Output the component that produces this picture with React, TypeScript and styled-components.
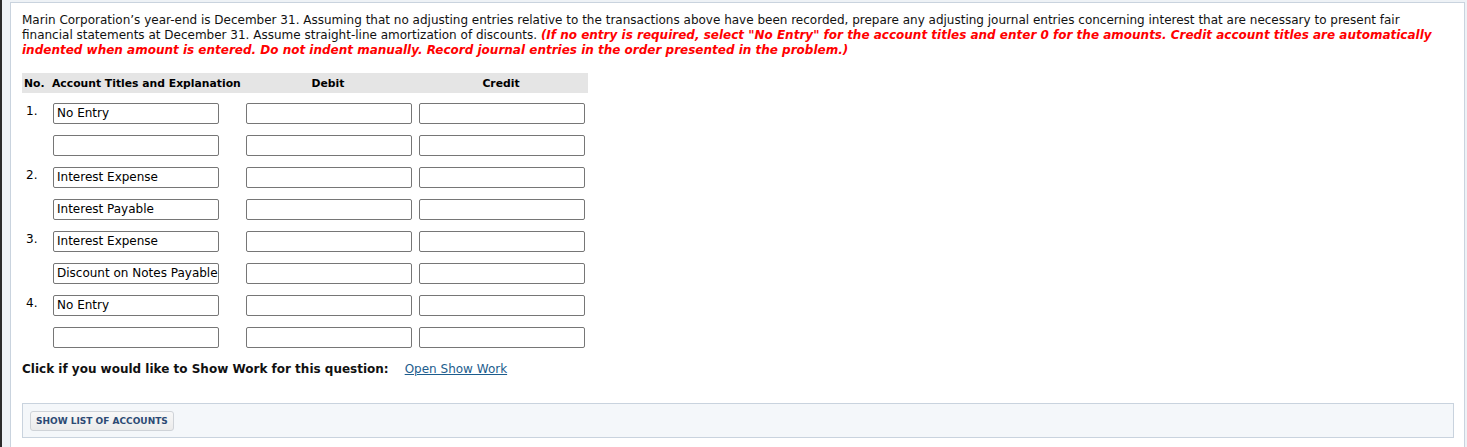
import React from "react";
import styled, { createGlobalStyle } from "styled-components";

const Global = createGlobalStyle`
  html, body { margin: 0; padding: 0; background: #ffffff; }
  body { font-family: Verdana, "DejaVu Sans", sans-serif; font-size: 12px; color: #000; }
`;

const Frame = styled.div`
  border-left: 2px solid #2b2b2b;
  background: #eef2f6;
  padding: 2px 2px 0 8px;
  min-height: 445px;
  box-sizing: border-box;
`;

const Panel = styled.div`
  background: #ffffff;
  border: 1px solid #c9d3de;
  border-bottom: none;
  padding: 10px 10px 10px 11px;
  min-height: 443px;
  box-sizing: border-box;
`;

const Prompt = styled.p`
  margin: 0;
  line-height: 15px;
  font-size: 12px;
  color: #111;
`;

const Note = styled.em`
  color: #ff0000;
  font-weight: bold;
`;

const Table = styled.div`
  margin-top: 15px;
  width: 566px;
`;

const Header = styled.div`
  display: grid;
  grid-template-columns: 30px 166px 27px 166px 7px 166px;
  height: 20px;
  align-items: center;
  background: #e5e5e5;
  font-weight: bold;
  font-size: 10.8px;
`;

const HeadCell = styled.div<{ $center?: boolean; $pad?: number }>`
  text-align: ${(p) => (p.$center ? "center" : "left")};
  padding-left: ${(p) => p.$pad ?? 0}px;
  white-space: nowrap;
`;

const Rows = styled.div`
  display: flex;
  flex-direction: column;
  gap: 11px;
  margin-top: 10px;
`;

const Row = styled.div`
  display: grid;
  grid-template-columns: 31px 166px 27px 166px 7px 166px;
  align-items: start;
`;

const Num = styled.div`
  padding: 2px 0 0 4px;
  font-size: 12px;
  line-height: 12px;
`;

const Field = styled.div`
  height: 21px;
  box-sizing: border-box;
  border: 1px solid #767676;
  border-radius: 2px;
  background: #fff;
  padding: 0 3px;
  font-size: 12px;
  line-height: 19px;
  white-space: nowrap;
  overflow: hidden;
`;

const ShowWork = styled.div`
  margin-top: 13px;
  display: flex;
  align-items: center;
  gap: 16px;
  line-height: 16px;
`;

const ShowLabel = styled.span`
  font-weight: bold;
  font-size: 12px;
  color: #111;
`;

const Link = styled.a`
  color: #1d5d8d;
  text-decoration: underline;
  font-size: 12px;
  cursor: pointer;
`;

const AccountsBar = styled.div`
  margin-top: 26px;
  background: #f4f7fa;
  border: 1px solid #c9d3de;
  padding: 6px 7px;
  width: 1432px;
  box-sizing: border-box;
  height: 35px;
  display: flex;
  align-items: center;
`;

const Button = styled.button`
  font-family: Verdana, "DejaVu Sans", sans-serif;
  font-size: 9px;
  font-weight: bold;
  color: #2c4a74;
  background: linear-gradient(#f8f8f8, #ebebeb);
  border: 1px solid #cfd3d8;
  border-radius: 3px;
  height: 20px;
  padding: 0 5px;
  letter-spacing: 0;
`;

const rows: { n?: string; acct: string }[] = [
  { n: "1.", acct: "No Entry" },
  { acct: "" },
  { n: "2.", acct: "Interest Expense" },
  { acct: "Interest Payable" },
  { n: "3.", acct: "Interest Expense" },
  { acct: "Discount on Notes Payable" },
  { n: "4.", acct: "No Entry" },
  { acct: "" },
];

export default function App() {
  return (
    <>
      <Global />
      <Frame>
        <Panel>
          <Prompt>
            Marin Corporation’s year-end is December 31. Assuming that no adjusting entries relative to the transactions above have been recorded, prepare any adjusting journal entries concerning interest that are necessary to present fair financial statements at December 31. Assume straight-line amortization of discounts.{" "}
            <Note>
              (If no entry is required, select "No Entry" for the account titles and enter 0 for the amounts. Credit account titles are automatically indented when amount is entered. Do not indent manually. Record journal entries in the order presented in the problem.)
            </Note>
          </Prompt>
          <Table>
            <Header>
              <HeadCell $pad={2}>No.</HeadCell>
              <HeadCell>Account Titles and Explanation</HeadCell>
              <div />
              <HeadCell $center>Debit</HeadCell>
              <div />
              <HeadCell $center>Credit</HeadCell>
            </Header>
            <Rows>
              {rows.map((r, i) => (
                <Row key={i}>
                  <Num>{r.n ?? ""}</Num>
                  <Field>{r.acct}</Field>
                  <div />
                  <Field />
                  <div />
                  <Field />
                </Row>
              ))}
            </Rows>
          </Table>
          <ShowWork>
            <ShowLabel>Click if you would like to Show Work for this question:</ShowLabel>
            <Link>Open Show Work</Link>
          </ShowWork>
          <AccountsBar>
            <Button>SHOW LIST OF ACCOUNTS</Button>
          </AccountsBar>
        </Panel>
      </Frame>
    </>
  );
}
